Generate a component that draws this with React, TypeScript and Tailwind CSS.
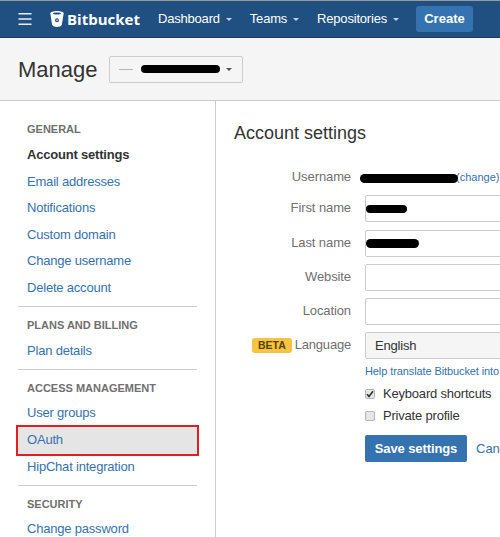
import React from "react";
import { Menu } from "lucide-react";

const font = "font-['Liberation_Sans',Arial,sans-serif]";

function Caret({ className }: { className: string }) {
  return <span className={`inline-block h-0 w-0 border-x-[3px] border-t-[3px] border-x-transparent ${className}`}></span>;
}

function NavItem({ label, className }: { label: string; className: string }) {
  return (
    <div className={`flex items-center gap-[6px] text-[13px] tracking-[-0.2px] text-white ${className}`}>
      {label}
      <Caret className="border-t-[#c5d3e2]" />
    </div>
  );
}

function SideHeading({ children, className = "" }: { children: React.ReactNode; className?: string }) {
  return <div className={`h-[16px] pl-[27px] text-[11px] leading-[16px] font-bold text-[#707070] uppercase ${className}`}>{children}</div>;
}

function SideLink({ label, active, hot }: { label: string; active?: boolean; hot?: boolean }) {
  if (hot) {
    return (
      <div className="mx-[16px] -mt-[0.25px] -mb-[3.25px] h-[31px] border-2 border-[#e02020] bg-[#e5e5e5] pl-[9px] text-[13px] leading-[25px] tracking-[-0.2px] text-[#3572b0]">
        {label}
      </div>
    );
  }
  return <div className={`h-[26.5px] pt-px pl-[27px] text-[13px] leading-[26.5px] tracking-[-0.2px] ${active ? "font-bold text-[#333333]" : "text-[#3572b0]"}`}>{label}</div>;
}

function Divider({ className }: { className: string }) {
  return <div className={`mx-[18px] h-px bg-[#cccccc] ${className}`}></div>;
}

function Blot({ className }: { className: string }) {
  return <span className={`block rounded-full bg-black ${className}`}></span>;
}

function Label({ children, className = "" }: { children: React.ReactNode; className?: string }) {
  return <div className={`w-[117px] shrink-0 text-right text-[13px] tracking-[-0.1px] text-[#707070] ${className}`}>{children}</div>;
}

function FieldRow({ label, blot, className = "" }: { label: string; blot?: string; className?: string }) {
  return (
    <div className={`flex items-center ${className}`}>
      <Label className="pb-[2px]">{label}</Label>
      <div className="ml-[14px] flex h-[27px] w-[200px] shrink-0 items-center rounded-[2px] border border-[#cccccc] bg-white">
        {blot && <Blot className={blot} />}
      </div>
    </div>
  );
}

function Check({ label, checked, className }: { label: string; checked?: boolean; className: string }) {
  return (
    <div className={`ml-[131px] flex h-[20px] items-center gap-[8px] text-[13px] tracking-[-0.2px] whitespace-nowrap text-[#333333] ${className}`}>
      <span className="flex h-[10px] w-[10px] shrink-0 items-center justify-center rounded-[2px] border border-[#b5b5b5] bg-[#e6e6e6]">
        {checked && (
          <svg width="8" height="8" viewBox="0 0 8 8">
            <path d="M1 4.200 3 6.400 7 1.200" fill="none" stroke="#333333" strokeWidth="1.600" />
          </svg>
        )}
      </span>
      {label}
    </div>
  );
}

export default function App() {
  return (
    <div className={`${font} relative h-[537px] w-[500px] overflow-hidden bg-white`}>
      {/* Top bar */}
      <div className="border-t border-[#9a9a9a]"></div>
      <header className="flex h-[37px] items-center border-b border-[#1c3d63] bg-[#205081]">
        <Menu className="ml-[16px] h-[18px] w-[18px] text-[#e8eef4]" strokeWidth={2} />
        <div className="ml-[16px] flex items-center gap-[3px]">
          <svg width="14" height="16" viewBox="0 0 14 16">
            <path fill="#ffffff" fillRule="evenodd" d="M7 0C3.500 0 .3 1 .3 2.300c0 .4 1.600 10.600 2 11.800C2.600 15.300 5 16 7 16s4.400-.7 4.700-1.900c.4-1.200 2-11.400 2-11.800C13.700 1 10.500 0 7 0zM7 3.600C4.700 3.600 2.900 3.100 2.900 2.500S4.700 1.400 7 1.400s4.100.5 4.100 1.100S9.300 3.600 7 3.600zM7 11.200a2 2 0 1 1 0-4 2 2 0 0 1 0 4zM7 10a.8.8 0 1 0 0-1.600A.8.8 0 0 0 7 10z" />
          </svg>
          <span className="w-[72px] font-['Open_Sans',sans-serif] text-[15px] leading-none font-bold text-white">Bitbucket</span>
        </div>
        <NavItem label="Dashboard" className="ml-[19px]" />
        <NavItem label="Teams" className="ml-[18px]" />
        <NavItem label="Repositories" className="ml-[18px]" />
        <button className="ml-[17px] h-[26px] w-[57px] rounded-[3px] bg-[#3572b0] text-[13px] font-bold text-white">Create</button>
      </header>

      {/* Manage strip */}
      <div className="flex h-[63px] items-center border-b border-[#cccccc] bg-[#f5f5f5] pl-[18px]">
        <h2 className="text-[22px] text-[#333333]">Manage</h2>
        <div className="ml-[11px] flex h-[27px] w-[134px] items-center rounded-[2px] border border-[#cccccc] bg-[#f5f5f5] pl-[9px]">
          <span className="h-px w-[14px] bg-[#b5b5b5]"></span>
          <Blot className="ml-[8px] h-[8px] w-[79px]" />
          <Caret className="ml-[6px] border-t-[#555555]" />
        </div>
      </div>

      <div className="flex">
        {/* Sidebar */}
        <aside className="h-[436px] w-[216px] shrink-0 border-r border-[#cccccc] pt-[20px]">
          <SideHeading className="mb-[4px]">General</SideHeading>
          <SideLink label="Account settings" active />
          <SideLink label="Email addresses" />
          <SideLink label="Notifications" />
          <SideLink label="Custom domain" />
          <SideLink label="Change username" />
          <SideLink label="Delete account" />
          <Divider className="mt-[6px] mb-[10px]" />
          <SideHeading className="mb-[4px]">Plans and billing</SideHeading>
          <SideLink label="Plan details" />
          <Divider className="mt-[5px] mb-[10px]" />
          <SideHeading className="mb-[3px]">Access management</SideHeading>
          <SideLink label="User groups" />
          <SideLink label="OAuth" hot />
          <SideLink label="HipChat integration" />
          <Divider className="mt-[6px] mb-[10px]" />
          <SideHeading className="mb-[3px]">Security</SideHeading>
          <SideLink label="Change password" />
        </aside>

        {/* Account form */}
        <main className="min-w-0 flex-1 pl-[18px]">
          <h1 className="mt-[22px] text-lg leading-[21px] text-[#333333]">Account settings</h1>
          <div className="mt-[23px] flex h-[20px] items-center whitespace-nowrap">
            <Label>Username</Label>
            <Blot className="relative z-10 mt-[2px] ml-[9px] h-[9px] w-[98px] shrink-0" />
            <span className="-ml-[2px] text-[11px] text-[#3572b0]">(change)</span>
          </div>
          <FieldRow label="First name" blot="h-[8px] w-[41px]" className="mt-[8px]" />
          <FieldRow label="Last name" blot="h-[9px] w-[53px]" className="mt-[8px]" />
          <FieldRow label="Website" className="mt-[7px]" />
          <FieldRow label="Location" className="mt-[7px]" />
          <div className="mt-[7px] flex items-center">
            <div className="flex w-[117px] shrink-0 items-center justify-end gap-[3px] pb-[2px] text-[13px] tracking-[-0.2px] text-[#707070]">
              <span className="mt-[2px] rounded-[3px] bg-[#f6c342] px-[6px] py-px text-[10.5px] leading-[13px] font-bold tracking-normal text-[#594300]">BETA</span>
              Language
            </div>
            <div className="ml-[14px] flex h-[27px] w-[200px] shrink-0 items-center rounded-[2px] border border-[#cccccc] bg-[#f5f5f5] pl-[9px] text-[13px] tracking-[-0.2px] text-[#333333]">English</div>
          </div>
          <div className="mt-[2px] ml-[131px] text-[11px] leading-[20px] tracking-[-0.1px] whitespace-nowrap text-[#3572b0]">Help translate Bitbucket into</div>
          <Check label="Keyboard shortcuts" checked className="mt-[3px]" />
          <Check label="Private profile" className="mt-[2px]" />
          <div className="mt-[9px] ml-[131px] flex items-center gap-[9px] whitespace-nowrap">
            <button className="h-[27px] w-[102px] shrink-0 rounded-[2px] bg-[#3572b0] text-[13px] font-bold tracking-[-0.1px] text-white">Save settings</button>
            <span className="text-[13px] text-[#3572b0]">Cancel</span>
          </div>
        </main>
      </div>
    </div>
  );
}
